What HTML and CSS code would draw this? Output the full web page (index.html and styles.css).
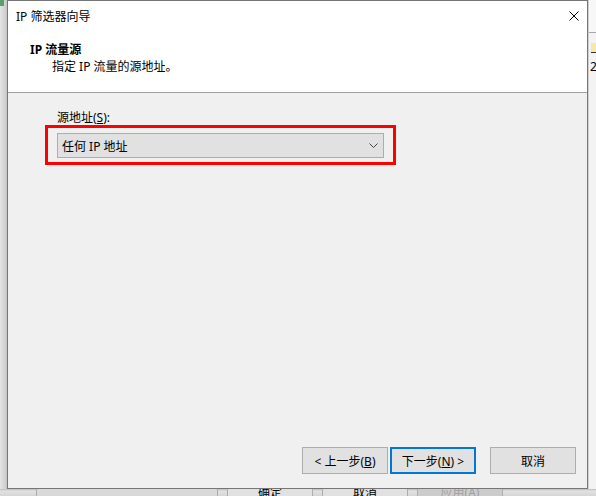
FILE: index.html
```html
<!DOCTYPE html>
<html lang="zh-CN">

<head>
  <meta charset="UTF-8">
  <meta name="viewport" content="width=device-width, initial-scale=1.0">
  <title>IP 筛选器向导</title>
  <link rel="stylesheet" href="styles.css">
</head>

<body>
  <div class="desk">
    <div class="side-left">
      <span class="app-icon"></span>
    </div>

    <div class="wizard">
      <div class="wizard-head">
        <div class="titlebar">
          <span class="title">IP 筛选器向导</span>
          <span class="close">
            <svg width="10" height="10" viewBox="0 0 10 10">
              <path d="M0.5 0.5 L9.5 9.5 M9.5 0.5 L0.5 9.5" stroke="#000" stroke-width="1" fill="none" />
            </svg>
          </span>
        </div>
        <p class="page-title">IP 流量源</p>
        <p class="page-desc">指定 IP 流量的源地址。</p>
      </div>

      <div class="wizard-body">
        <label class="field-label">源地址(<u>S</u>):</label>
        <div class="highlight">
          <div class="combo">
            <span>任何 IP 地址</span>
            <svg width="9" height="5" viewBox="0 0 9 5">
              <path d="M0.5 0.5 L4.5 4.5 L8.5 0.5" stroke="#444" stroke-width="1" fill="none" />
            </svg>
          </div>
        </div>
      </div>

      <div class="wizard-foot">
        <button type="button" class="btn">&lt; 上一步(<u>B</u>)</button>
        <button type="button" class="btn btn-default">下一步(<u>N</u>) &gt;</button>
        <button type="button" class="btn btn-cancel">取消</button>
      </div>
    </div>

    <div class="side-right">
      <div class="side-right-top"></div>
      <span class="mark"></span>
      <span class="digit">2</span>
    </div>

    <!-- window behind the wizard, only its buttons peek out -->
    <div class="under">
      <span class="under-btn under-wide"></span>
      <span class="under-btn">确定</span>
      <span class="under-btn">取消</span>
      <span class="under-btn under-off">应用(A)</span>
    </div>
  </div>
</body>

</html>
```

FILE: styles.css
```css
* {
  padding: 0;
  margin: 0;
  box-sizing: border-box;
}

body {
  font-family: "Noto Sans", "Noto Sans CJK SC", sans-serif;
  font-size: 12px;
  color: #000;
  background-color: #f0f0f0;
}

.desk {
  width: 596px;
  height: 496px;
  overflow: hidden;
  display: grid;
  grid-template-columns: 7px 581px 8px;
  grid-template-rows: 489px 7px;
}

.side-left {
  background: linear-gradient(to right, #e4e4e4, #d2d2d2 70%, #c4c4c4);
}

.side-left>.app-icon {
  display: block;
  width: 4px;
  height: 6px;
  background-color: #5a9e6f;
}

/* wizard window */
.wizard {
  border: 1px solid #767676;
  background-color: #f0f0f0;
  display: flex;
  flex-direction: column;
}

.wizard-head {
  background-color: #fff;
  border-bottom: 1px solid #a0a0a0;
  padding-bottom: 17px;
}

.titlebar {
  height: 30px;
  display: flex;
  align-items: center;
  justify-content: space-between;
  padding: 0 8px;
}

.titlebar>.close {
  display: flex;
  width: 10px;
  height: 10px;
}

.page-title {
  font-weight: bold;
  line-height: 17px;
  margin-top: 10px;
  padding-left: 22px;
}

.page-desc {
  line-height: 17px;
  padding-left: 44px;
}

.wizard-body {
  padding: 18px 0 0 37px;
}

.field-label {
  display: block;
  line-height: 14px;
  margin-left: 12px;
}

.highlight {
  width: 351px;
  height: 40px;
  border: 3px solid #ff0000;
  padding: 5px 9px 4px 9px;
}

.combo {
  height: 25px;
  border: 1px solid #adadad;
  background-color: #e1e1e1;
  display: flex;
  align-items: center;
  justify-content: space-between;
  padding: 0 5px 0 4px;
}

.wizard-foot {
  margin-top: auto;
  display: flex;
  justify-content: flex-end;
  padding: 0 11px 14px 0;
}

.btn {
  width: 86px;
  height: 27px;
  border: 1px solid #adadad;
  background-color: #e1e1e1;
  font-family: inherit;
  font-size: 12px;
  color: #000;
}

.btn-default {
  border: 2px solid #0078d7;
  margin-left: 2px;
}

.btn-cancel {
  margin-left: 14px;
}

/* stuff behind the wizard */
.side-right {
  background-color: #f3f3f3;
  border-left: 1px solid #d0d0d0;
  display: flex;
  flex-direction: column;
  align-items: flex-start;
  overflow: hidden;
}

.side-right-top {
  width: 100%;
  height: 33px;
  background-color: #f7f7f7;
  border-bottom: 1px solid #a8a8a8;
}

.side-right>.mark {
  width: 6px;
  height: 10px;
  margin-top: 10px;
  margin-left: 2px;
  border-bottom: 1px solid #333;
  background-color: #f4e9a8;
}

.side-right>.digit {
  margin-top: 8px;
  margin-left: 1px;
  line-height: 12px;
}

.under {
  grid-column: 1 / 4;
  background: linear-gradient(to bottom, #bdbdbd, #e2e2e2 2px, #d6d6d6);
  display: flex;
  gap: 9px;
  padding-left: 36px;
  overflow: hidden;
}

.under-btn {
  width: 86px;
  height: 23px;
  margin-top: -8px;
  border: 1px solid #adadad;
  background-color: #e1e1e1;
  text-align: center;
  line-height: 22px;
}

.under-wide {
  width: 182px;
  background-color: #d9d9d9;
}

.under-off {
  color: #a0a0a0;
  background-color: #cccccc;
}
```
